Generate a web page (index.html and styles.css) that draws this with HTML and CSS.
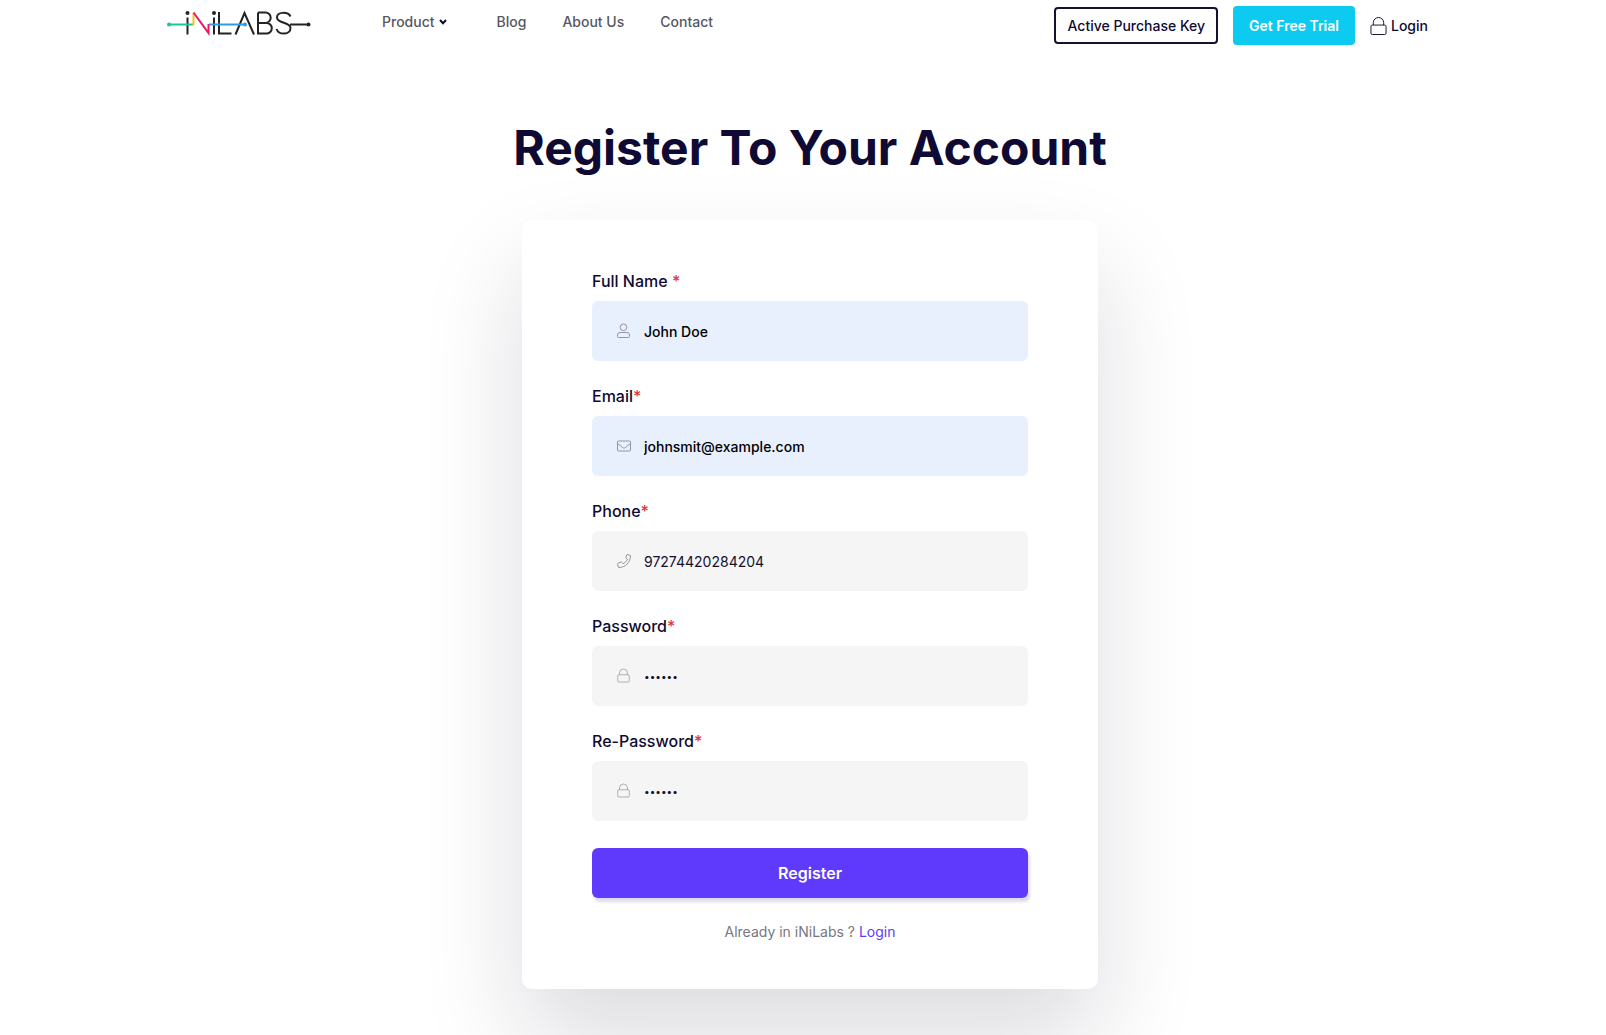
FILE: index.html
```html
<!DOCTYPE html>
<html lang="en">
<head>
<meta charset="utf-8">
<meta name="viewport" content="width=device-width, initial-scale=1">
<title>Register - iNiLabs</title>
<link rel="stylesheet" href="styles.css">
</head>
<body>
<svg class="sprite" aria-hidden="true">
  <symbol id="lock" viewBox="0 0 18 20"><rect x="1" y="9" width="16" height="10" rx="1.5"/><path d="M3.500 9V6.500a5.500 5.500 0 0 1 11 0V9"/></symbol>
</svg>
<header class="header">
  <a class="logo" href="#" aria-label="iNiLabs">
    <svg viewBox="0 0 144 26" width="144" height="26" fill="none" stroke-width="2">
      <g stroke="#222325">
        <path d="M20.500 7.500v17M47 7.500v17M52 2v21.500h12.500M68.500 24.500 77.500 3l9.500 21.500M91 2.500v21h8.500a5.300 5.300 0 0 0 0-10.600H91M91 2.500h7.500a5.200 5.200 0 0 1 0 10.400"/>
        <path d="M123.500 6.500C121 1.500 110 1.500 110 7.500c0 6.500 13.500 4 13.500 10.500 0 7-11.500 7.500-14 1M123 14.500h18"/>
      </g>
      <path d="M1.500 14.500h25" stroke="#16c79a"/><path d="M26.500 15V3" stroke="#f5c518"/>
      <path d="M26.500 2.500 41.500 23V14" stroke="#ec1561"/><path d="M42 14.500h36" stroke="#2e9be6"/>
      <circle cx="2" cy="14.500" r="2" fill="#16c79a"/><circle cx="78" cy="14.500" r="2" fill="#2e9be6"/>
      <g fill="#222325"><circle cx="20.500" cy="3" r="2"/><circle cx="47" cy="3" r="2"/><circle cx="141.500" cy="14.500" r="2"/></g>
    </svg>
  </a>
  <nav class="nav">
    <a class="product" href="#">Product <svg viewBox="0 0 8 6" width="8" height="6"><path d="m1 1 3 3.200L7 1"/></svg></a>
    <a href="#">Blog</a>
    <a href="#">About Us</a>
    <a href="#">Contact</a>
  </nav>
  <div class="actions">
    <a class="key" href="#">Active Purchase Key</a>
    <a class="trial" href="#">Get Free Trial</a>
    <a class="login" href="#"><svg class="icon" width="17" height="20"><use href="#lock"/></svg>Login</a>
  </div>
</header>
<main>
  <h1>Register To Your Account</h1>
  <form class="card">
    <div class="field filled">
      <label for="name">Full Name <span>*</span></label>
      <div class="box"><svg class="icon" viewBox="0 0 14 16" width="14" height="16"><circle cx="6.500" cy="4.300" r="3.300"/><path d="M3 9.500h7a2.500 2.500 0 0 1 2.500 2.500v1.500a1 1 0 0 1-1 1h-10a1 1 0 0 1-1-1V12A2.500 2.500 0 0 1 3 9.500Z"/></svg><input id="name" type="text" value="John Doe"></div>
    </div>
    <div class="field filled">
      <label for="email">Email<span>*</span></label>
      <div class="box"><svg class="icon" viewBox="0 0 14 16" width="14" height="16"><rect x=".5" y="3" width="13" height="10" rx="1"/><path d="m.5 5.500 5 4c1 .8 2 .8 3 0l5-4"/></svg><input id="email" type="email" value="johnsmit@example.com"></div>
    </div>
    <div class="field">
      <label for="phone">Phone<span>*</span></label>
      <div class="box"><svg class="icon" viewBox="0 0 14 16" width="14" height="16"><path d="m10 1.500 3 .7c.4.100.5.300.5.700C13.300 9.500 8.500 14.300 2 14.500c-.4 0-.6-.1-.7-.5l-.7-3c-.1-.4 0-.6.4-.8l3-1.200c.4-.1.600 0 .8.200l1.300 1.500c2-1 3.500-2.400 4.400-4.500L9 5c-.3-.3-.3-.5-.2-.8l1.200-2.700Z"/></svg><input id="phone" type="tel" value="97274420284204"></div>
    </div>
    <div class="field">
      <label for="password">Password<span>*</span></label>
      <div class="box"><svg class="icon" viewBox="0 0 14 16" width="14" height="16"><use href="#lock" width="13" height="15"/></svg><input id="password" type="password" value="secret"></div>
    </div>
    <div class="field">
      <label for="repeat">Re-Password<span>*</span></label>
      <div class="box"><svg class="icon" viewBox="0 0 14 16" width="14" height="16"><use href="#lock" width="13" height="15"/></svg><input id="repeat" type="password" value="secret"></div>
    </div>
    <button type="submit">Register</button>
    <p>Already in iNiLabs ? <a href="#">Login</a></p>
  </form>
</main>
</body>
</html>
```

FILE: styles.css
```css
* { box-sizing: border-box; }
body {
  margin: 0;
  padding-left: 14px;
  background: #fff;
  color: #0f0a33;
  font: 500 14px/24px Inter, "Liberation Sans", sans-serif;
}
a { color: inherit; text-decoration: none; }
svg { flex: none; }
.sprite { display: none; }
.icon { fill: none; stroke: currentColor; stroke-width: 1; }
.header {
  display: flex;
  align-items: flex-start;
  max-width: 1320px;
  margin: 0 auto;
  padding: 6px 42px 0 17px;
}
.logo { display: flex; padding-top: 4px; }
.nav { display: flex; gap: 36px; margin-left: 71px; padding-top: 4px; color: #57575f; }
.product { display: flex; align-items: center; gap: 4px; margin-right: 14px; }
.product svg { fill: none; stroke: #0f0a33; stroke-width: 2; }
.actions { display: flex; align-items: center; gap: 15px; margin-left: auto; }
.key { padding: 6px 11px 5px; border: 2px solid #14102e; border-radius: 4px; line-height: 22px; }
.trial { padding: 8px 16px 7px; border-radius: 4px; background: #0dcaf0; color: #fff; font-weight: 600; }
.login { display: flex; align-items: center; gap: 4px; }
main { display: flex; flex-direction: column; align-items: center; padding: 73px 16px 47px; }
h1 { margin: 0 0 42px; font-size: 48px; line-height: 60px; font-weight: 700; text-align: center; }
.card {
  display: flex;
  flex-direction: column;
  gap: 23px;
  width: 100%;
  max-width: 576px;
  padding: 49px 70px 45px;
  border-radius: 10px;
  background: #fff;
  box-shadow: 0 50px 100px rgba(17, 16, 41, .15);
}
.field { display: flex; flex-direction: column; gap: 8px; }
label { font-size: 16px; }
label span { color: #dc3545; }
.box {
  display: flex;
  align-items: center;
  gap: 13px;
  height: 60px;
  padding: 0 25px;
  border-radius: 6px;
  background: #f5f5f5;
}
.box .icon { color: #96959e; }
.filled .box { background: #e8f0fe; }
input {
  flex: 1;
  min-width: 0;
  padding: 2px 0 0;
  border: 0;
  outline: 0;
  background: transparent;
  color: #14102e;
  font: 400 14px/24px Inter, "Liberation Sans", sans-serif;
}
input[type="password"] { padding: 0; font-size: 10px; }
.filled input { color: #000; font-weight: 500; }
button {
  height: 50px;
  margin-top: 4px;
  border: 0;
  border-radius: 6px;
  background: #5f3afc;
  box-shadow: 2px 4px 3px rgba(31, 16, 142, .15);
  color: #fff;
  font: 600 16px/24px Inter, "Liberation Sans", sans-serif;
}
p { margin: -1px 0 0; color: #777780; font-weight: 400; text-align: center; }
p a { color: #5f3afc; }
```
